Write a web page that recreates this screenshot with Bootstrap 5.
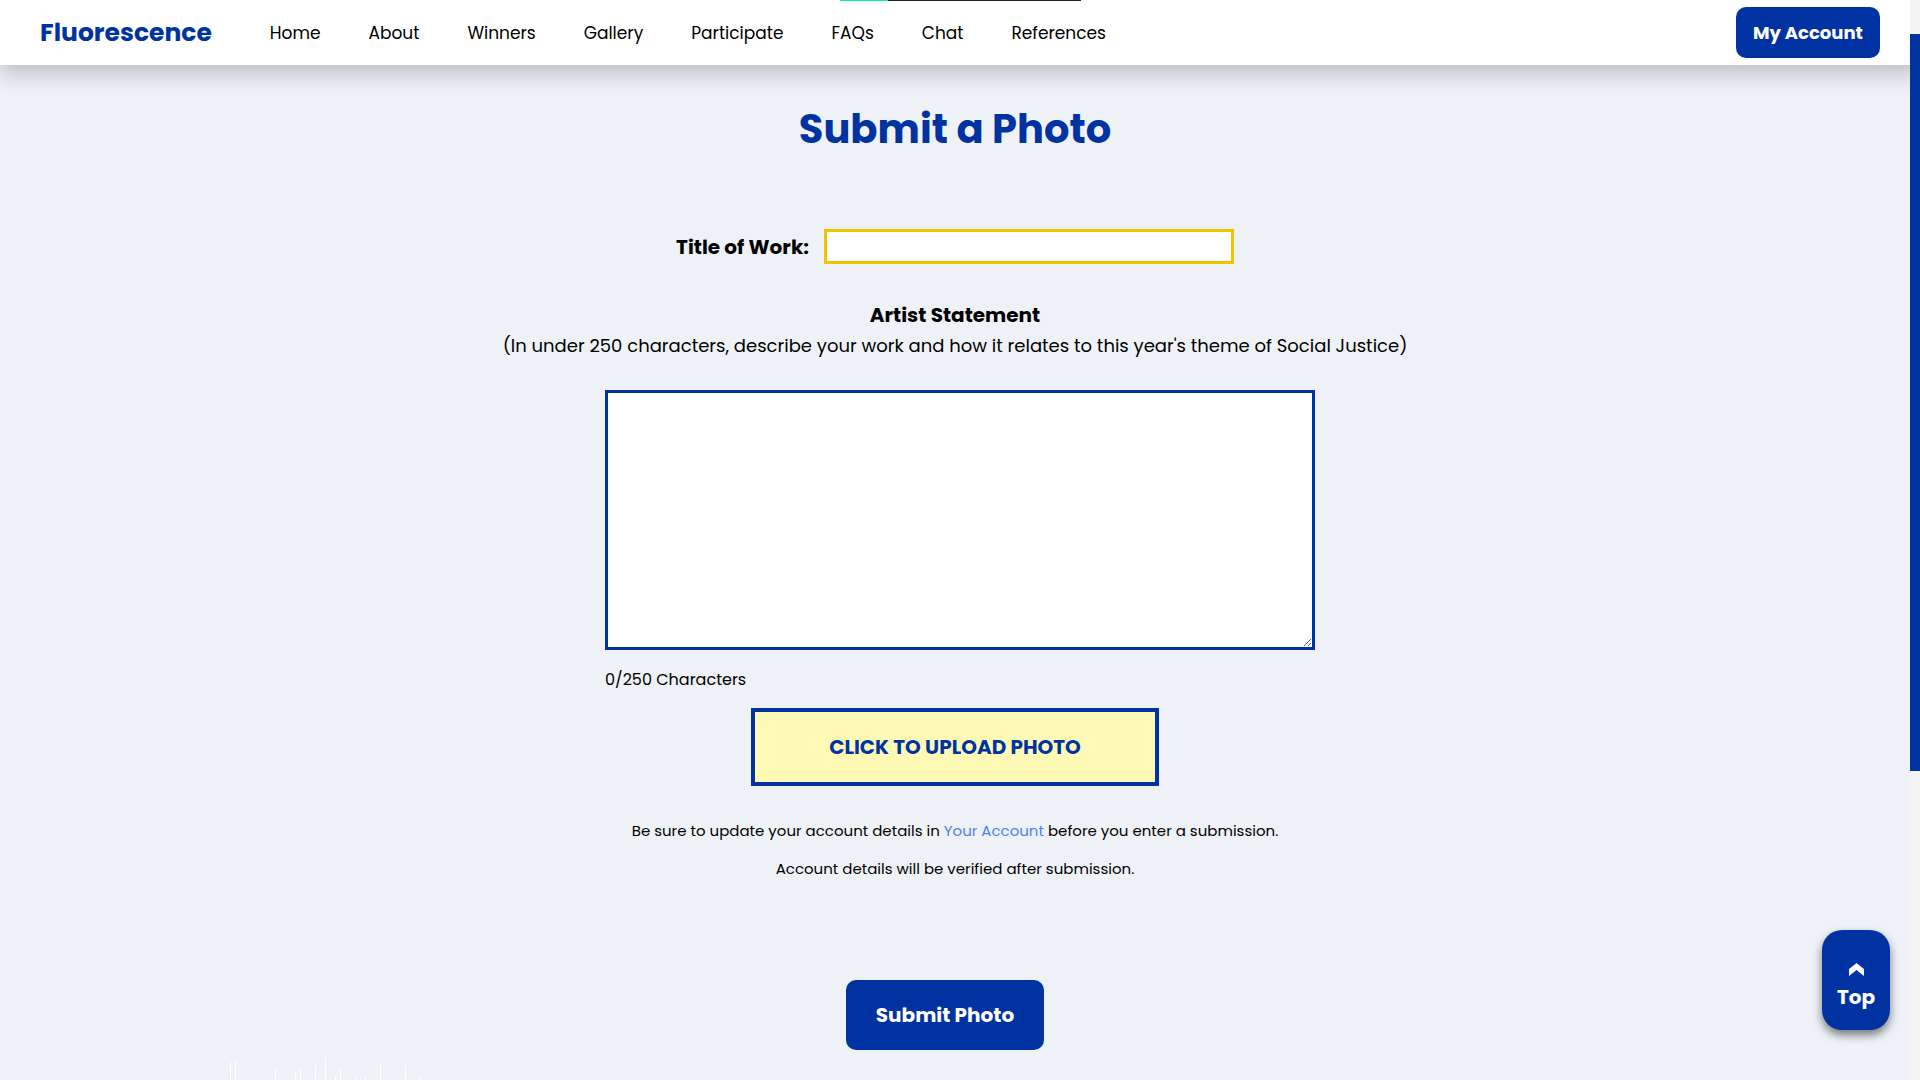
<!DOCTYPE html>
<html lang="en">
<head>
<meta charset="utf-8">
<meta name="viewport" content="width=device-width, initial-scale=1">
<title>Fluorescence - Submit a Photo</title>
<link href="https://cdn.jsdelivr.net/npm/bootstrap@5.3.0/dist/css/bootstrap.min.css" rel="stylesheet">
<style>
  :root { --royal: #0033a1; --gold: #f1c400; --mist: #eef2f7; }
  body { font-family: Poppins, Inter, sans-serif; background: var(--mist); color: #000; font-size: 16px; font-weight: 400; }
  .site-nav { min-height: 65px; margin-right: -10px; padding: 7px 40px 7px 40px; background: #fff; box-shadow: 0 10px 20px rgba(0,0,0,.2); position: relative; z-index: 2; }
  .site-nav .navbar-brand { color: var(--royal); font-size: 25px; font-weight: 700; line-height: 32px; margin: 0 50px 0 0; padding: 0; }
  .site-nav .navbar-nav { gap: 32px; }
  .site-nav .nav-link { color: #000; padding: 1px 8px 0; font-size: 17px; line-height: 24px; }
  .load-strip { top: 0; left: 43.75%; width: 241px; height: 1px; background: #222; }
  .load-strip span { display: block; width: 20%; height: 1px; background: #00fa9a; }
  .btn-royal, .btn-royal:hover { background: var(--royal); color: #fff; font-weight: 700; border: 0; border-radius: 10px; }
  .btn-account { width: 144px; height: 51px; padding: 0; font-size: 18px; }
  .btn-submit { width: 198px; height: 70px; padding: 0; font-size: 20px; margin: 84px 20px 0 0; }
  .page-title { color: var(--royal); font-size: 40px; font-weight: 700; line-height: 48px; margin: 40px 0 76px; }
  .field-label { font-size: 20px; font-weight: 700; line-height: 30px; }
  .title-row { gap: 15px; margin-bottom: 36px; }
  .title-input { width: 410px; height: 35px; border: 3px solid var(--gold); border-radius: 0; }
  .hint { font-size: 18px; line-height: 30px; margin: 1px 0 29px; }
  .statement-box { width: 710px; margin-left: 10px; }
  .statement-box textarea { height: 260px; border: 3px solid var(--royal); border-radius: 0; resize: both; }
  .counter { font-size: 16px; line-height: 24px; margin: 18px 0 16px; }
  .btn-upload, .btn-upload:hover { width: 408px; height: 78px; border: 4px solid var(--royal); border-radius: 0; background: #fff9b6; color: var(--royal); font-size: 20px; font-weight: 700; }
  .notes { font-size: 15px; line-height: 22px; margin-top: 34px; }
  .notes p { margin: 0 0 16px; }
  .notes a { color: #4f7ff0; text-decoration: none; }
  .btn-top, .btn-top:hover { right: 30px; bottom: 50px; width: 68px; height: 100px; padding: 15px 0 0; border-radius: 20px; font-size: 20px; line-height: 30px; gap: 6px; box-shadow: 0 5px 10px rgba(0,0,0,.5); }
  .scroll-rail { width: 10px; background: #f3f3f3; padding-top: 34px; z-index: 3; }
  .scroll-thumb { height: 70.5%; background: var(--royal); }
  .bars { left: 200px; bottom: 0; }
</style>
<script src="https://cdn.jsdelivr.net/npm/bootstrap@5.3.0/dist/js/bootstrap.bundle.min.js"></script>
</head>
<body>
<div class="d-flex vh-100 overflow-hidden position-relative">
  <div class="flex-grow-1 d-flex flex-column">
    <nav class="navbar navbar-expand site-nav">
      <a class="navbar-brand" href="#">Fluorescence</a>
      <ul class="navbar-nav me-auto">
        <li class="nav-item"><a class="nav-link" href="#">Home</a></li>
        <li class="nav-item"><a class="nav-link" href="#">About</a></li>
        <li class="nav-item"><a class="nav-link" href="#">Winners</a></li>
        <li class="nav-item"><a class="nav-link" href="#">Gallery</a></li>
        <li class="nav-item"><a class="nav-link" href="#">Participate</a></li>
        <li class="nav-item"><a class="nav-link" href="#">FAQs</a></li>
        <li class="nav-item"><a class="nav-link" href="#">Chat</a></li>
        <li class="nav-item"><a class="nav-link" href="#">References</a></li>
      </ul>
      <button type="button" class="btn btn-royal btn-account">My Account</button>
      <div class="load-strip position-absolute"><span></span></div>
    </nav>
    <main class="text-center">
      <h1 class="page-title">Submit a Photo</h1>
      <form class="d-flex flex-column align-items-center">
        <div class="title-row d-flex align-items-center">
          <label class="field-label" for="work-title">Title of Work:</label>
          <input class="form-control title-input" id="work-title" type="text">
        </div>
        <label class="field-label" for="statement">Artist Statement</label>
        <p class="hint">(In under 250 characters, describe your work and how it relates to this year's theme of Social Justice)</p>
        <div class="statement-box text-start">
          <textarea class="form-control" id="statement" maxlength="250"></textarea>
          <p class="counter">0/250 Characters</p>
        </div>
        <button type="button" class="btn btn-upload">CLICK TO UPLOAD PHOTO</button>
        <div class="notes">
          <p>Be sure to update your account details in <a href="#">Your Account</a> before you enter a submission.</p>
          <p>Account details will be verified after submission.</p>
        </div>
        <button type="submit" class="btn btn-royal btn-submit">Submit Photo</button>
      </form>
    </main>
  </div>
  <svg class="bars position-absolute" width="392" height="24" aria-hidden="true">
    <path d="M0 23.500H392" stroke="#fff" stroke-dasharray="1 4"/>
    <path d="M30.500 24v-18M35.500 24v-20M75.500 24v-12M95.500 24v-9M100.500 24v-12M115.500 24v-15M125.500 24v-22M135.500 24v-4M140.500 24v-12M155.500 24v-2M165.500 24v-4M180.500 24v-17M205.500 24v-15M220.500 24v-3" stroke="#fff"/>
  </svg>
  <button type="button" class="btn btn-royal btn-top position-absolute d-flex flex-column align-items-center justify-content-center">
    <svg width="15" height="13" viewBox="0 0 15 13" aria-hidden="true"><path d="M7.500 0L15 6V13L7.500 7L0 13V6Z" fill="#fff"/></svg>
    <span>Top</span>
  </button>
  <div class="scroll-rail" aria-hidden="true"><div class="scroll-thumb"></div></div>
</div>
</body>
</html>
